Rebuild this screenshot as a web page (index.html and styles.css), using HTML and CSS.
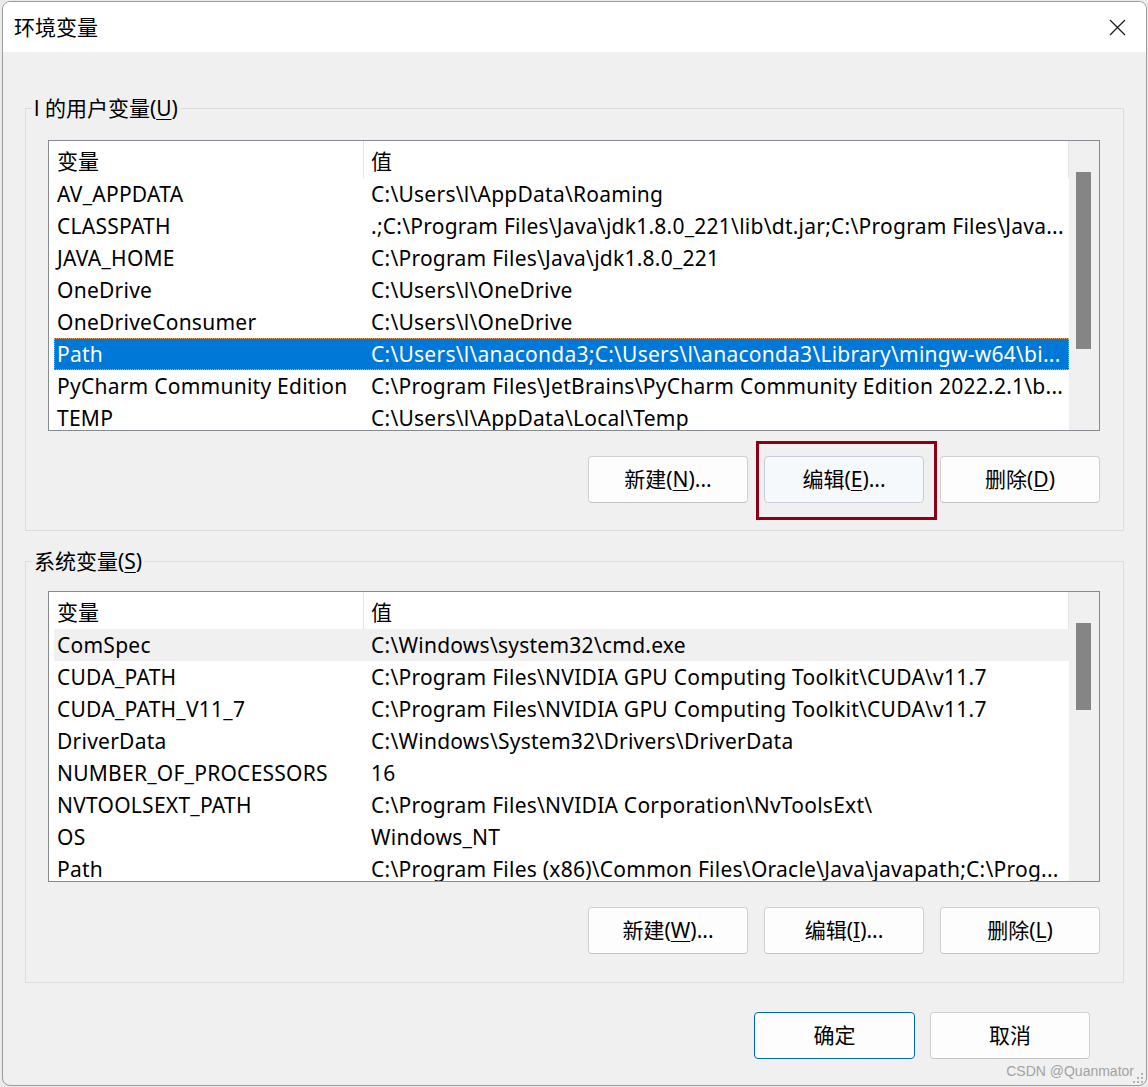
FILE: index.html
```html
<!DOCTYPE html>
<html lang="zh-CN">
<head>
<meta charset="utf-8">
<title>环境变量</title>
<link rel="stylesheet" href="styles.css">
</head>
<body>
<div class="window">
  <div class="titlebar">
    <span class="title">环境变量</span>
    <svg class="close" width="17" height="17" viewBox="0 0 17 17" aria-label="关闭"><path d="M1 1 L16 16 M16 1 L1 16" stroke="#1b1b1b" stroke-width="1.25" fill="none"/></svg>
  </div>

  <fieldset class="group group-user">
    <legend>l 的用户变量(<u>U</u>)</legend>
    <div class="list">
      <div class="list-body">
        <div class="list-head"><div class="c1">变量</div><div class="c2">值</div></div>
        <div class="row"><div class="c1">AV_APPDATA</div><div class="c2">C:\Users\l\AppData\Roaming</div></div>
        <div class="row"><div class="c1">CLASSPATH</div><div class="c2">.;C:\Program Files\Java\jdk1.8.0_221\lib\dt.jar;C:\Program Files\Java...</div></div>
        <div class="row"><div class="c1">JAVA_HOME</div><div class="c2">C:\Program Files\Java\jdk1.8.0_221</div></div>
        <div class="row"><div class="c1">OneDrive</div><div class="c2">C:\Users\l\OneDrive</div></div>
        <div class="row"><div class="c1">OneDriveConsumer</div><div class="c2">C:\Users\l\OneDrive</div></div>
        <div class="row selected"><div class="c1">Path</div><div class="c2">C:\Users\l\anaconda3;C:\Users\l\anaconda3\Library\mingw-w64\bi...</div></div>
        <div class="row"><div class="c1">PyCharm Community Edition</div><div class="c2">C:\Program Files\JetBrains\PyCharm Community Edition 2022.2.1\b...</div></div>
        <div class="row"><div class="c1">TEMP</div><div class="c2">C:\Users\l\AppData\Local\Temp</div></div>
      </div>
      <div class="scrollbar"><div class="thumb thumb-user"></div></div>
    </div>
    <div class="buttons">
      <button class="btn">新建(<u>N</u>)...</button>
      <div class="mark-wrap">
        <button class="btn btn-hover">编辑(<u>E</u>)...</button>
        <span class="mark"></span>
      </div>
      <button class="btn">删除(<u>D</u>)</button>
    </div>
  </fieldset>

  <fieldset class="group group-sys">
    <legend>系统变量(<u>S</u>)</legend>
    <div class="list">
      <div class="list-body">
        <div class="list-head"><div class="c1">变量</div><div class="c2">值</div></div>
        <div class="row hover"><div class="c1">ComSpec</div><div class="c2">C:\Windows\system32\cmd.exe</div></div>
        <div class="row"><div class="c1">CUDA_PATH</div><div class="c2">C:\Program Files\NVIDIA GPU Computing Toolkit\CUDA\v11.7</div></div>
        <div class="row"><div class="c1">CUDA_PATH_V11_7</div><div class="c2">C:\Program Files\NVIDIA GPU Computing Toolkit\CUDA\v11.7</div></div>
        <div class="row"><div class="c1">DriverData</div><div class="c2">C:\Windows\System32\Drivers\DriverData</div></div>
        <div class="row"><div class="c1">NUMBER_OF_PROCESSORS</div><div class="c2">16</div></div>
        <div class="row"><div class="c1">NVTOOLSEXT_PATH</div><div class="c2">C:\Program Files\NVIDIA Corporation\NvToolsExt\</div></div>
        <div class="row"><div class="c1">OS</div><div class="c2">Windows_NT</div></div>
        <div class="row"><div class="c1">Path</div><div class="c2">C:\Program Files (x86)\Common Files\Oracle\Java\javapath;C:\Prog...</div></div>
      </div>
      <div class="scrollbar"><div class="thumb thumb-sys"></div></div>
    </div>
    <div class="buttons">
      <button class="btn">新建(<u>W</u>)...</button>
      <button class="btn">编辑(<u>I</u>)...</button>
      <button class="btn">删除(<u>L</u>)</button>
    </div>
  </fieldset>

  <div class="footer">
    <button class="btn btn-default">确定</button>
    <button class="btn">取消</button>
  </div>

  <span class="watermark">CSDN @Quanmator</span>
  <svg class="grip" width="12" height="12" viewBox="0 0 12 12" aria-hidden="true">
    <rect x="9" y="1" width="2" height="2"/>
    <rect x="5" y="5" width="2" height="2"/><rect x="9" y="5" width="2" height="2"/>
    <rect x="1" y="9" width="2" height="2"/><rect x="5" y="9" width="2" height="2"/><rect x="9" y="9" width="2" height="2"/>
  </svg>
</div>
</body>
</html>
```

FILE: styles.css
```css
* { box-sizing: border-box; }
html, body { margin: 0; padding: 0; }
body {
  background: #ebebeb;
  font-family: "Noto Sans", "Noto Sans CJK SC", sans-serif;
  font-size: 21px;
  color: #000;
  width: 1148px;
  height: 1087px;
  overflow: hidden;
}
.window {
  margin: 1px 0 0 2px;
  width: 1145px;
  height: 1085px;
  border: 1px solid #9c9c9c;
  border-radius: 8px;
  background: #f0f0f0;
  overflow: hidden;
  position: relative;
  display: flex;
  flex-direction: column;
}
.titlebar {
  height: 50px;
  flex-shrink: 0;
  background: #fff;
  display: flex;
  align-items: center;
  justify-content: space-between;
  padding: 0 20px 0 11px;
}
.title { line-height: 28px; }
.close { display: block; }

.group {
  margin: 42px 22px 0;
  border: 1px solid #dcdcdc;
  padding: 18px 23px 27px 6px;
  min-width: 0;
}
.group-sys { margin-top: 16px; padding-top: 16px; padding-bottom: 28px; }
.group legend { padding: 0 2px; line-height: 28px; }
u { text-underline-offset: 3px; text-decoration-thickness: 1px; }

.list {
  margin-left: 16px;
  height: 291px;
  border: 1px solid #868a91;
  background: #fff;
  display: flex;
}
.list-body { flex: 1; min-width: 0; overflow: hidden; padding-left: 5px; }
.scrollbar { width: 30px; flex-shrink: 0; background: #f0f0f0; padding: 31px 0 0 7px; }
.thumb { width: 15px; background: #858585; }
.thumb-user { height: 177px; }
.thumb-sys { height: 87px; }

.list-head { display: flex; height: 37px; border-right: 1px solid #e3e3e3; }
.list-head > div { padding-top: 4px; line-height: 33px; }
.list-head .c1 { border-right: 1px solid #e3e3e3; }
.row { display: flex; height: 32px; line-height: 32px; letter-spacing: 0.25px; }
.c1 { width: 310px; flex-shrink: 0; padding-left: 3px; white-space: nowrap; overflow: hidden; }
.c2 { flex: 1; min-width: 0; padding-left: 7px; white-space: nowrap; overflow: hidden; }
.row.selected { background: #0078d7; color: #fff; outline: 1px dotted #f0a35c; outline-offset: -1px; }
.row.hover { background: #f0f0f0; }

.buttons { display: flex; justify-content: flex-end; gap: 16px; margin: 25px 0 0 16px; }
.btn {
  width: 160px;
  height: 47px;
  padding: 0;
  border: 1px solid #d0d0d0;
  border-bottom-color: #c4c4c4;
  border-radius: 4px;
  background: #fdfdfd;
  font-family: inherit;
  font-size: 21px;
  line-height: 45px;
  color: #000;
}
.btn-hover { background: #f6f9fc; border-color: #c5ced9; }
.btn-default { border-color: #0067c0; width: 161px; }
.mark-wrap { position: relative; display: flex; }
.mark {
  position: absolute;
  left: -8px;
  top: -15px;
  width: 181px;
  height: 79px;
  border: 3px solid #8c0014;
  pointer-events: none;
}

.footer { display: flex; justify-content: flex-end; gap: 15px; margin-top: 29px; padding-right: 56px; }

.watermark {
  position: absolute;
  right: 12px;
  bottom: 6px;
  font-family: "Liberation Sans", Arial, sans-serif;
  font-size: 14px;
  line-height: 16px;
  color: #a3a3a3;
}
.grip { position: absolute; right: 2px; bottom: 1px; fill: #b4b4b4; }
```
